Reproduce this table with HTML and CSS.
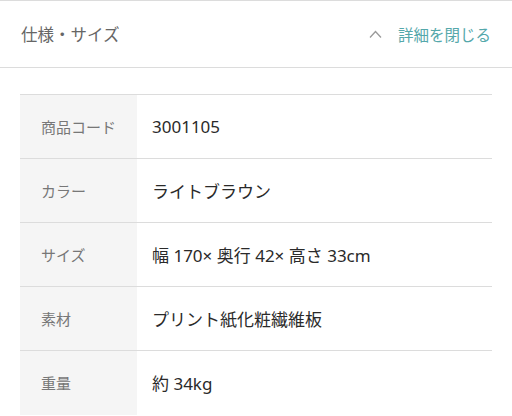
FILE: index.html
```html
<!DOCTYPE html>
<html lang="ja">
<head>
    <meta charset="UTF-8">
    <meta name="viewport" content="width=device-width, initial-scale=1.0">
    <title>仕様・サイズ</title>
    <link rel="stylesheet" href="styles.css">
</head>
<body>

    <!-- 見出し -->
    <div class="spec-header">
        <h2 class="spec-title">仕様・サイズ</h2>
        <a class="spec-toggle" href="#">
            <svg class="caret" width="13" height="8" viewBox="0 0 13 8">
                <polyline points="1,7.5 6.5,1.5 12,7.5" fill="none" stroke="#9a9a9a" stroke-width="1.3"/>
            </svg>
            <span>詳細を閉じる</span>
        </a>
    </div>

    <!-- 仕様テーブル -->
    <div class="spec-body">
        <table class="spec-table">
            <tr>
                <th>商品コード</th>
                <td>3001105</td>
            </tr>
            <tr>
                <th>カラー</th>
                <td>ライトブラウン</td>
            </tr>
            <tr>
                <th>サイズ</th>
                <td>幅 170× 奥行 42× 高さ 33cm</td>
            </tr>
            <tr>
                <th>素材</th>
                <td>プリント紙化粧繊維板</td>
            </tr>
            <tr>
                <th>重量</th>
                <td>約 34kg</td>
            </tr>
        </table>
    </div>

</body>
</html>
```

FILE: styles.css
```css
body {
    margin: 0;
    background-color: #fff;
    font-family: "Noto Sans CJK JP", "Noto Sans", sans-serif;
    color: #333;
}

.spec-header {
    display: flex;
    justify-content: space-between;
    align-items: center;
    height: 66px;
    padding: 0 21px;
    border-top: 1px solid #dcdcdc;
    border-bottom: 1px solid #dcdcdc;
}

.spec-title {
    margin: 0;
    font-size: 16.5px;
    font-weight: normal;
    color: #666;
}

.spec-toggle {
    display: flex;
    align-items: center;
    gap: 16px;
    color: #55a8ab;
    font-size: 15.5px;
    text-decoration: none;
}

.spec-body {
    padding: 26px 20px 0;
}

.spec-table {
    width: 100%;
    border-collapse: collapse;
    border-top: 1px solid #dcdcdc;
}

.spec-table tr {
    height: 64px;
    border-bottom: 1px solid #dcdcdc;
}

.spec-table tr:last-child {
    border-bottom: none;
}

.spec-table th {
    width: 117px;
    padding: 0 0 0 21px;
    box-sizing: border-box;
    text-align: left;
    font-weight: normal;
    font-size: 15px;
    color: #777;
    background-color: #f5f5f5;
}

.spec-table td {
    padding: 0 0 0 15px;
    font-family: "Noto Sans", "Noto Sans CJK JP", sans-serif;
    font-size: 17px;
    color: #2a2a2a;
}
```
